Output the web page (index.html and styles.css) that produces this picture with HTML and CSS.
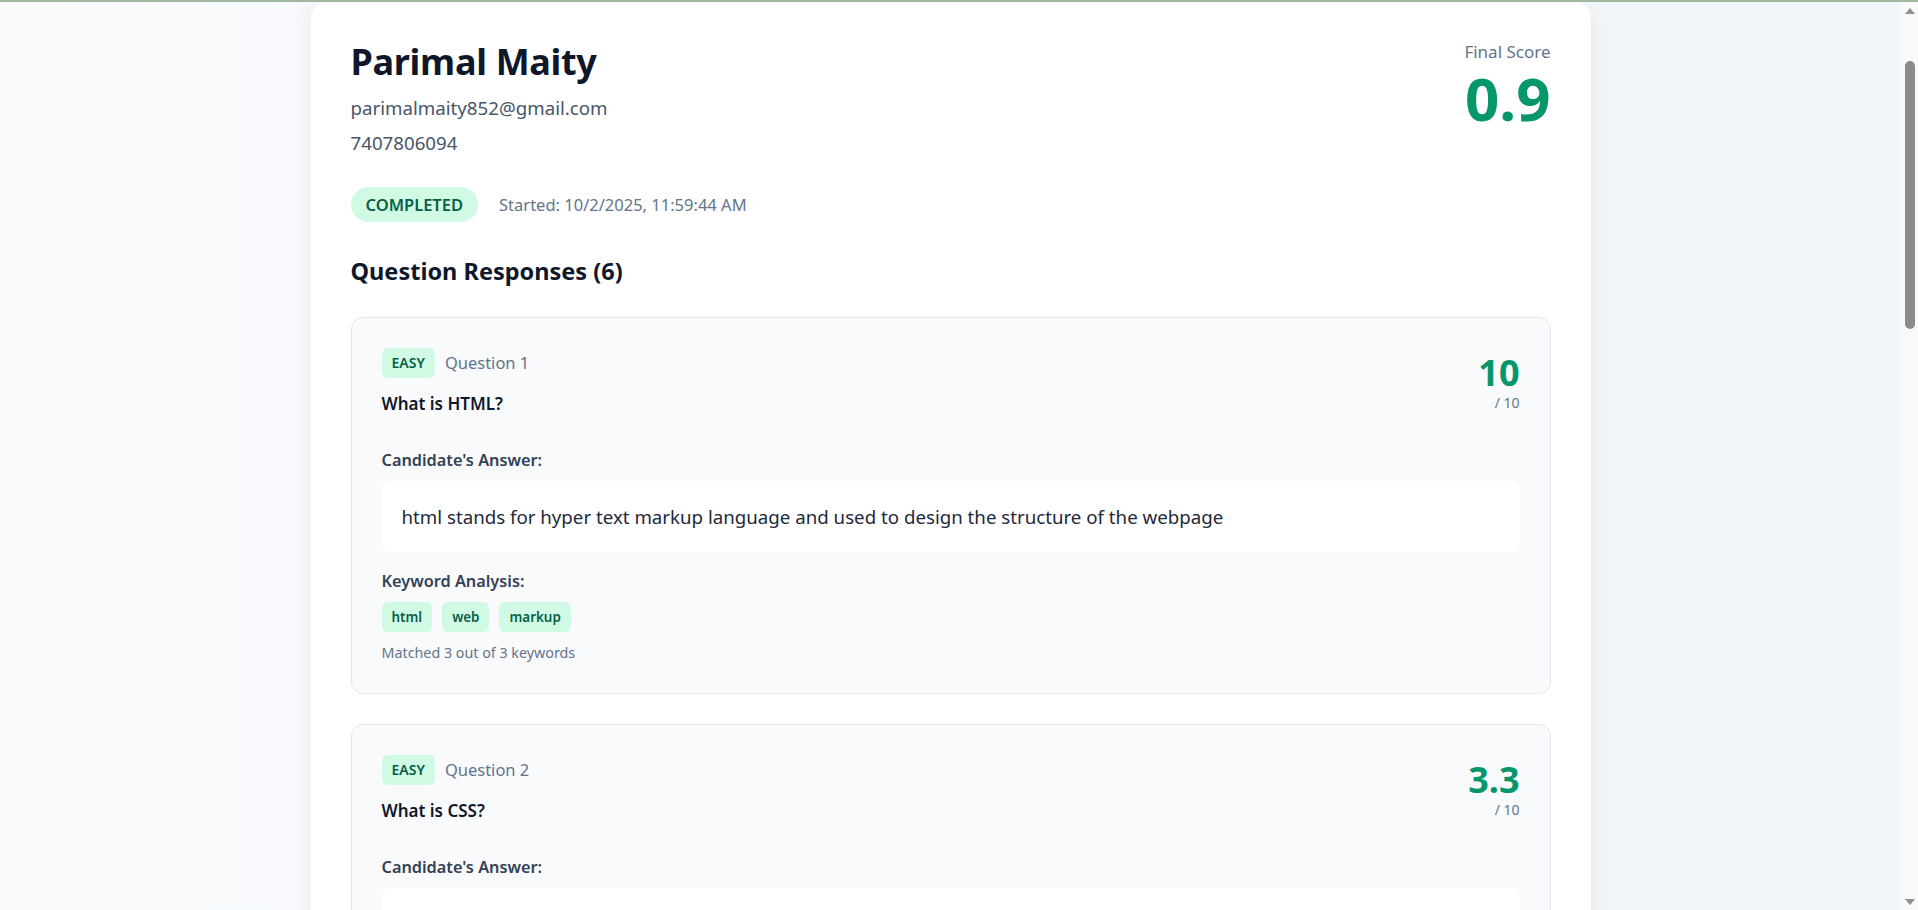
FILE: index.html
```html
<!DOCTYPE html>
<html lang="en">
<head>
<meta charset="utf-8">
<title>Parimal Maity - Interview Result</title>
<link rel="stylesheet" href="styles.css">
</head>
<body>
<div class="topline"></div>
<div class="frame">
  <main class="page">
    <div class="container">
      <section class="card">
        <header class="head">
          <div class="who">
            <h1 class="name">Parimal Maity</h1>
            <p class="contact">parimalmaity852@gmail.com</p>
            <p class="contact phone">7407806094</p>
          </div>
          <div class="final">
            <div class="final-label">Final Score</div>
            <div class="final-value">0.9</div>
          </div>
        </header>

        <div class="status-row">
          <span class="status">COMPLETED</span>
          <span class="started">Started: 10/2/2025, 11:59:44 AM</span>
        </div>

        <h2 class="section-title">Question Responses (6)</h2>

        <article class="qcard">
          <div class="qhead">
            <div class="qinfo">
              <div class="qmeta">
                <span class="level">EASY</span>
                <span class="qnum">Question 1</span>
              </div>
              <h3 class="qtitle">What is HTML?</h3>
            </div>
            <div class="qscore">
              <div class="qscore-value">10</div>
              <div class="qscore-max">/ 10</div>
            </div>
          </div>
          <div class="label">Candidate's Answer:</div>
          <div class="answer">html stands for hyper text markup language and used to design the structure of the webpage</div>
          <div class="keywords">
            <div class="label">Keyword Analysis:</div>
            <div class="chips">
              <span class="chip">html</span>
              <span class="chip">web</span>
              <span class="chip">markup</span>
            </div>
            <div class="matched">Matched 3 out of 3 keywords</div>
          </div>
        </article>

        <article class="qcard">
          <div class="qhead">
            <div class="qinfo">
              <div class="qmeta">
                <span class="level">EASY</span>
                <span class="qnum">Question 2</span>
              </div>
              <h3 class="qtitle">What is CSS?</h3>
            </div>
            <div class="qscore">
              <div class="qscore-value">3.3</div>
              <div class="qscore-max">/ 10</div>
            </div>
          </div>
          <div class="label">Candidate's Answer:</div>
          <div class="answer">css is used to style the webpage</div>
        </article>
      </section>
    </div>
  </main>
  <div class="scrollbar">
    <div class="sb-btn"><span class="arrow-up"></span></div>
    <div class="sb-track"><div class="sb-thumb"></div></div>
    <div class="sb-btn"><span class="arrow-down"></span></div>
  </div>
</div>
</body>
</html>
```

FILE: styles.css
```css
* { box-sizing: border-box; }

html, body {
  margin: 0;
  height: 100%;
  overflow: hidden;
}

body {
  font-family: "Noto Sans", "Open Sans", "Liberation Sans", sans-serif;
  color: #0f172a;
  background: #f8fafc;
}

.topline {
  height: 2px;
  background: #9fb89e;
}

.frame {
  display: flex;
  height: calc(100vh - 2px);
}

.page {
  flex: 1;
  overflow: hidden;
  background: linear-gradient(90deg, #f8fafc 0%, #f2f6f9 100%);
}

.container {
  max-width: 1280px;
  margin: 0 auto;
}

.card {
  background: #ffffff;
  border-radius: 16px 16px 0 0;
  box-shadow: 0 4px 24px rgba(15, 23, 42, 0.07);
  padding: 38px 40px 40px;
  min-height: 1200px;
}

.head {
  display: flex;
  justify-content: space-between;
  align-items: flex-start;
}

.name {
  margin: 0;
  font-size: 36px;
  line-height: 44px;
  font-weight: 700;
  color: #0f172a;
  letter-spacing: -0.3px;
}

.contact {
  margin: 10px 0 0;
  font-size: 18.7px;
  line-height: 27px;
  color: #475569;
}

.contact.phone { margin-top: 8px; }

.final { text-align: right; }

.final-label {
  font-size: 17px;
  line-height: 24px;
  color: #64748b;
}

.final-value {
  margin-top: 4px;
  font-size: 60px;
  line-height: 60px;
  font-weight: 700;
  color: #059669;
}

.status-row {
  display: flex;
  align-items: center;
  gap: 21px;
  margin-top: 31px;
}

.status {
  display: inline-block;
  padding: 6px 15px;
  border-radius: 999px;
  background: #d1fae5;
  color: #065f46;
  font-size: 16.5px;
  line-height: 23px;
  font-weight: 600;
}

.started {
  font-size: 16.5px;
  line-height: 23px;
  color: #64748b;
}

.section-title {
  margin: 34px 0 31px;
  font-size: 23.5px;
  line-height: 30px;
  font-weight: 700;
  color: #0f172a;
}

.qcard {
  background: #f8fafc;
  border: 1px solid #e2e8f0;
  border-radius: 12px;
  padding: 30px;
  margin-bottom: 30px;
}

.qhead {
  display: flex;
  justify-content: space-between;
  align-items: center;
  margin-bottom: 31px;
}

.qmeta {
  display: flex;
  align-items: center;
  gap: 10px;
}

.level {
  display: inline-block;
  padding: 5px 10px;
  border-radius: 6px;
  background: #d1fae5;
  color: #065f46;
  font-size: 14px;
  line-height: 20px;
  font-weight: 600;
}

.qnum {
  font-size: 16.5px;
  line-height: 24px;
  color: #64748b;
}

.qtitle {
  margin: 12px 0 0;
  font-size: 17px;
  line-height: 27px;
  font-weight: 600;
  color: #0f172a;
}

.qscore { text-align: right; }

.qscore-value {
  font-size: 36px;
  line-height: 40px;
  font-weight: 700;
  color: #059669;
}

.qscore-max {
  font-size: 14px;
  line-height: 20px;
  color: #64748b;
}

.label {
  font-size: 16.3px;
  line-height: 24px;
  font-weight: 600;
  color: #334155;
}

.answer {
  margin-top: 9px;
  background: #ffffff;
  border-radius: 8px;
  padding: 20px;
  font-size: 18.7px;
  line-height: 31px;
  color: #1e293b;
}

.keywords { margin-top: 17px; }

.chips {
  display: flex;
  gap: 10px;
  margin-top: 9px;
}

.chip {
  display: inline-block;
  padding: 5px 10px;
  border-radius: 6px;
  background: #d1fae5;
  color: #065f46;
  font-size: 13.4px;
  line-height: 20px;
  font-weight: 600;
}

.matched {
  margin-top: 11px;
  font-size: 14.3px;
  line-height: 20px;
  color: #64748b;
}

/* classic scrollbar */
.scrollbar {
  width: 17px;
  display: flex;
  flex-direction: column;
  background: #f9f9f9;
}

.sb-btn {
  height: 17px;
  display: flex;
  align-items: center;
  justify-content: center;
}

.arrow-up, .arrow-down {
  width: 0;
  height: 0;
  border-left: 5px solid transparent;
  border-right: 5px solid transparent;
}

.arrow-up { border-bottom: 6px solid #8f8f8f; }
.arrow-down { border-top: 6px solid #8f8f8f; }

.sb-track {
  flex: 1;
  display: flex;
  justify-content: center;
}

.sb-thumb {
  width: 10px;
  height: 268px;
  margin-top: 42px;
  border-radius: 5px;
  background: #8b8b8b;
}
```
